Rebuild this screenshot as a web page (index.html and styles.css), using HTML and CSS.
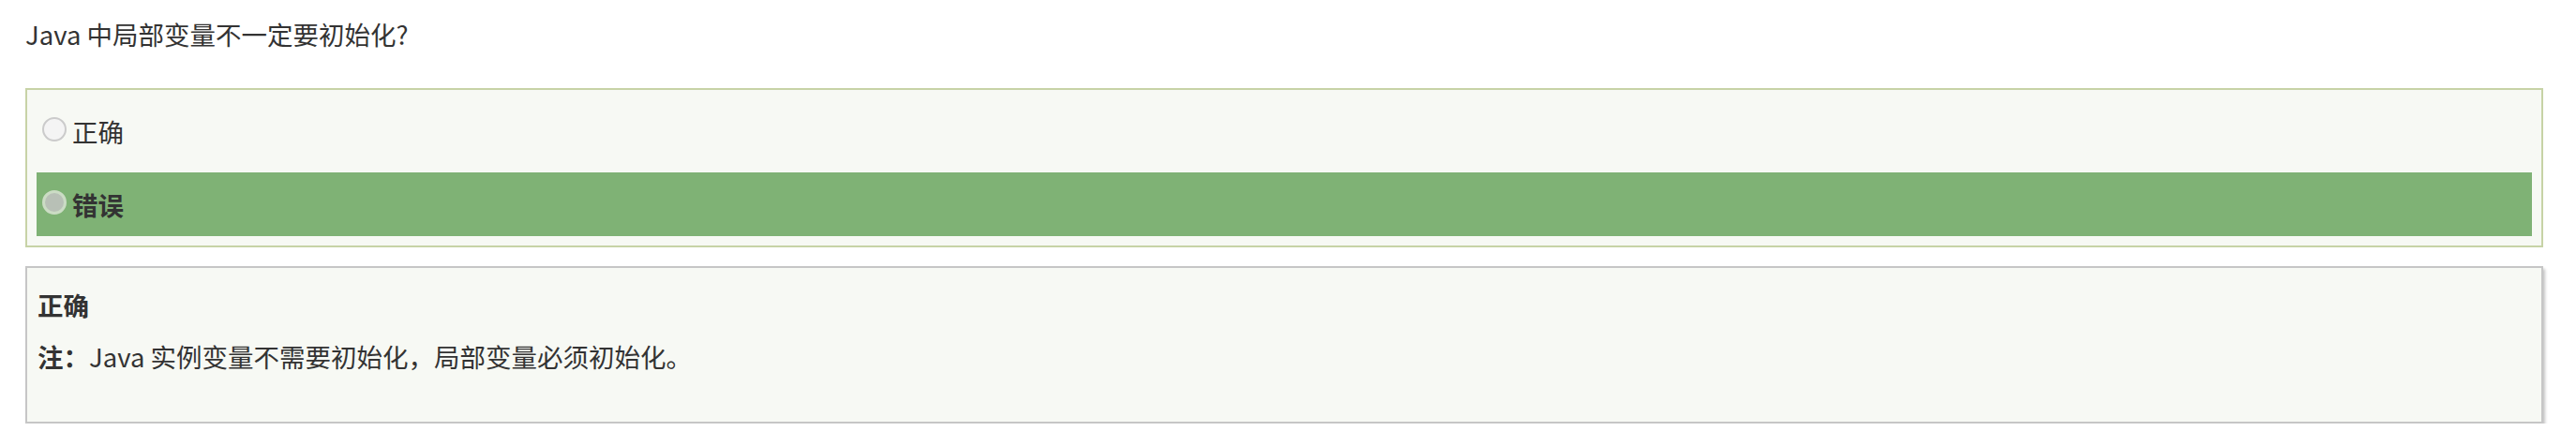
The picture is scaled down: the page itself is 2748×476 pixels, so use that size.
FILE: index.html
```html
<!DOCTYPE html>
<html lang="zh-CN">
<head>
<meta charset="utf-8">
<title>Quiz</title>
<link rel="stylesheet" href="styles.css">
</head>
<body>
<div class="page">
  <p class="question">Java 中局部变量不一定要初始化?</p>
  <div class="options">
    <label class="option">
      <span class="radio"></span>
      <span class="option-text">正确</span>
    </label>
    <label class="option option-selected">
      <span class="radio radio-checked"></span>
      <span class="option-text">错误</span>
    </label>
  </div>
  <div class="answer">
    <div class="answer-title">正确</div>
    <p class="answer-note"><strong>注：</strong>Java 实例变量不需要初始化，局部变量必须初始化。</p>
  </div>
</div>
</body>
</html>
```
FILE: styles.css
```css
html, body {
  margin: 0;
  padding: 0;
  background: #ffffff;
}
body {
  font-family: "Noto Sans CJK SC", "Noto Sans", sans-serif;
  color: #333333;
  font-size: 27.5px;
}
.page {
  padding: 17px 35px 0 27px;
}
.question {
  margin: 0;
  line-height: 39px;
}
.options {
  margin-top: 38px;
  border: 2px solid #c7d3a6;
  background: #f7f9f4;
  padding: 10px;
  display: flex;
  flex-direction: column;
  gap: 10px;
}
.option {
  height: 68px;
  display: flex;
  align-items: center;
  padding-left: 6px;
  gap: 6px;
}
.option-selected {
  background: #7fb275;
  font-weight: bold;
}
.radio {
  width: 22px;
  height: 22px;
  border-radius: 50%;
  border: 2px solid #cbcbcb;
  background: #f4f4f4;
  flex: none;
  margin-top: -4px;
}
.radio-checked {
  width: 20px;
  height: 20px;
  border: 3px solid #cbdcc4;
  background: #b8c0b6;
}
.option-text {
  line-height: 39px;
}
.answer {
  margin-top: 20px;
  border: 2px solid #c6c6c6;
  background: #f7f9f4;
  box-shadow: 2px 3px 3px #c4c4c4;
  padding: 20px 11px 24px;
}
.answer-title {
  font-weight: bold;
  line-height: 39px;
}
.answer-note {
  margin: 16px 0 26px;
  line-height: 39px;
}
.answer-note strong {
  font-weight: bold;
}
```
